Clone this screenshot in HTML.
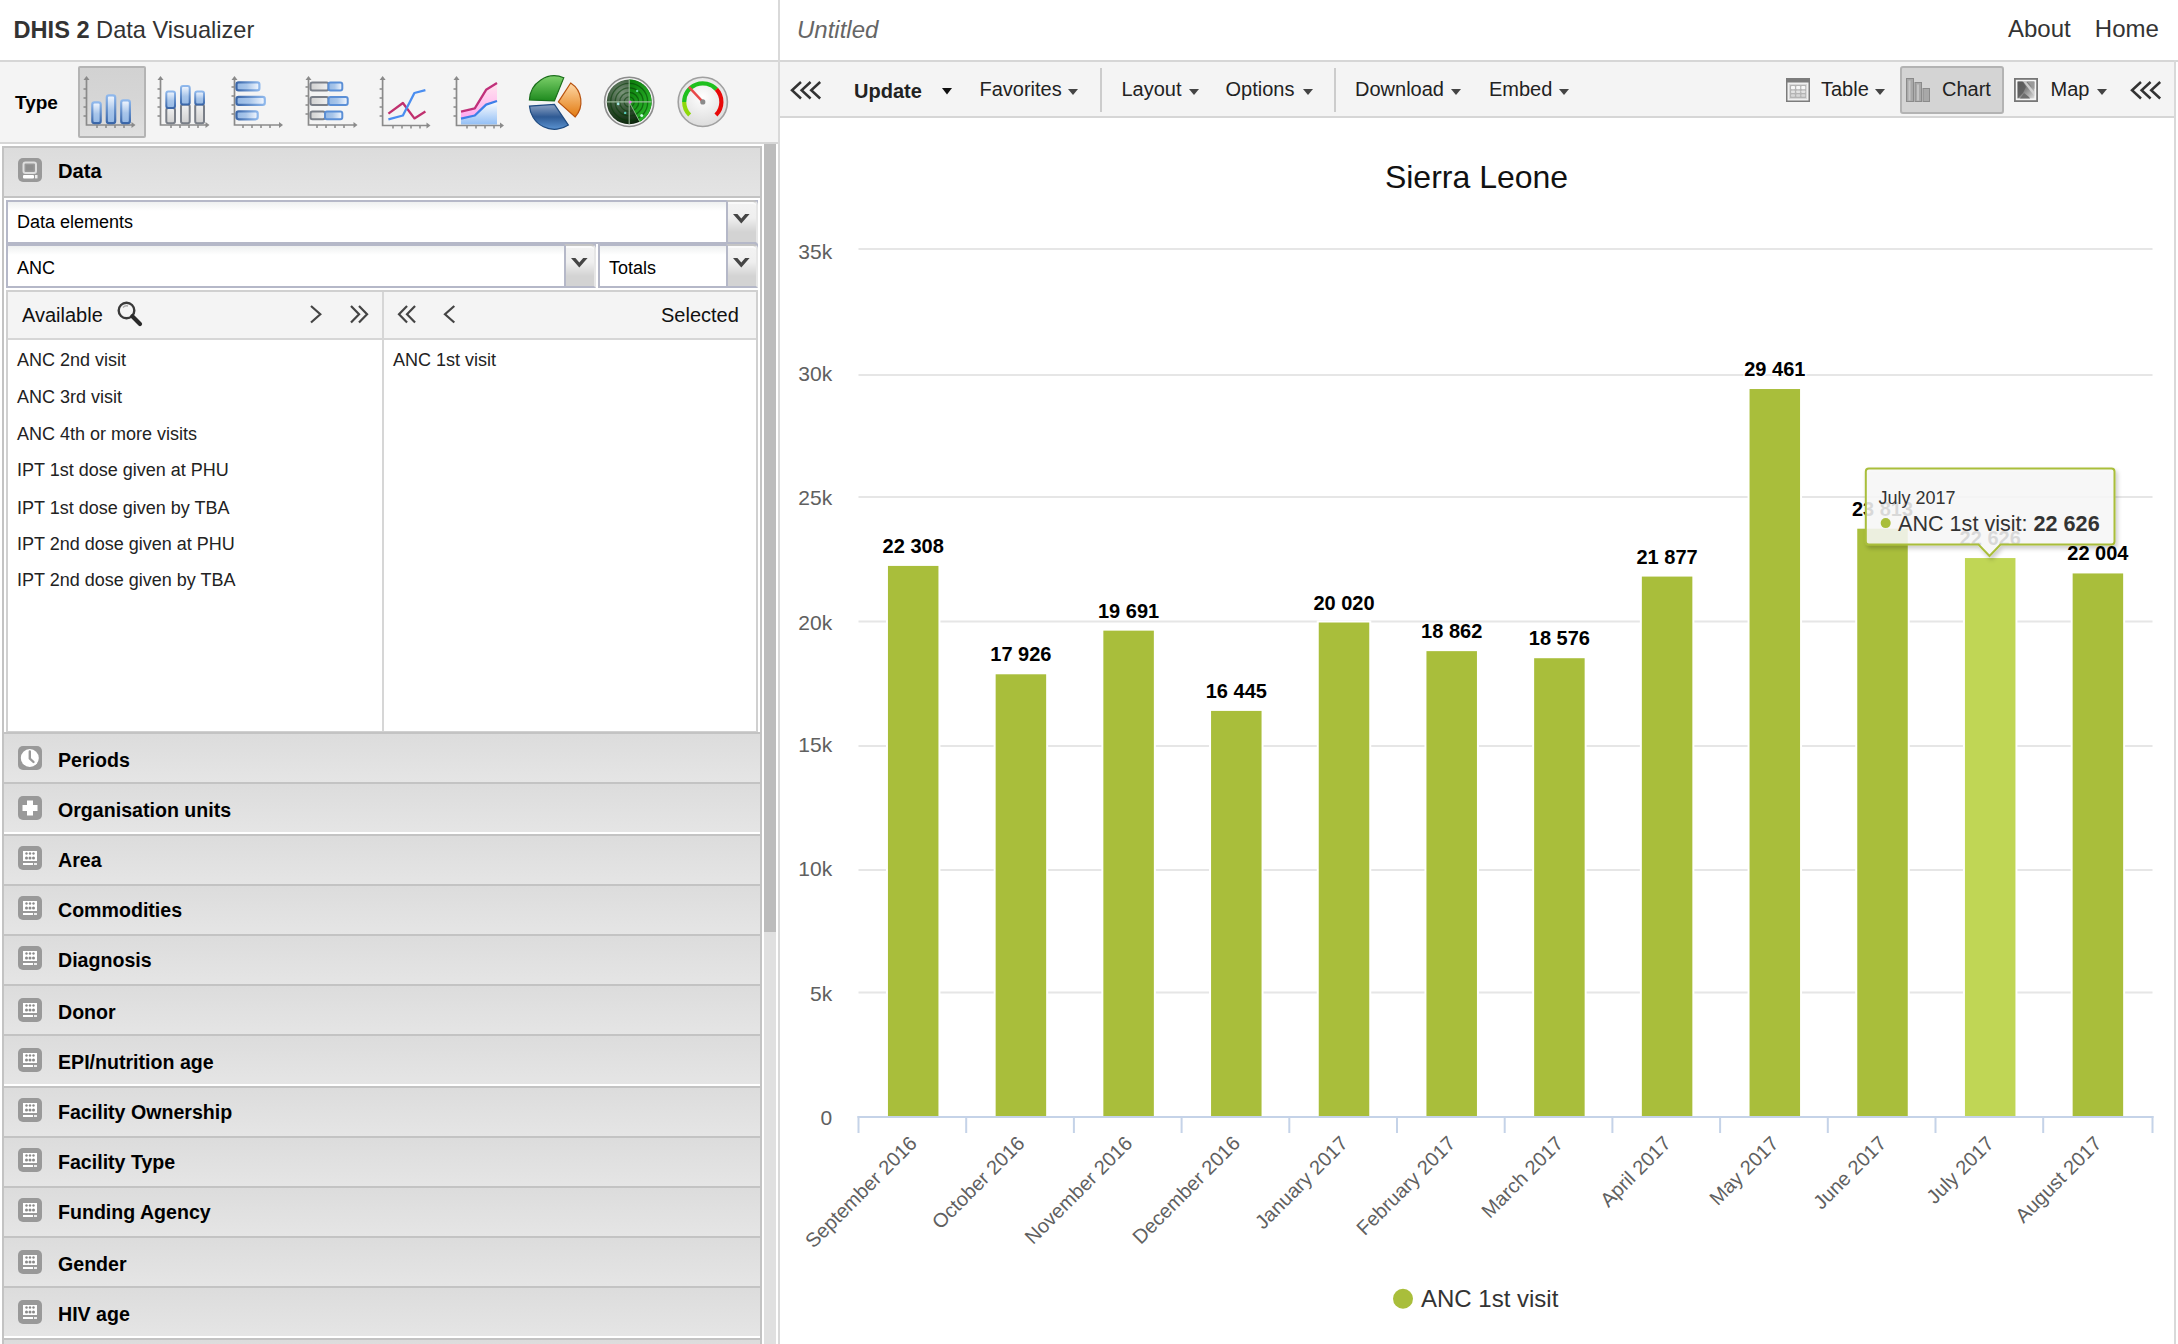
<!DOCTYPE html><html><head><meta charset="utf-8"><style>html,body{margin:0;padding:0;width:2178px;height:1344px;overflow:hidden;background:#fff;}body{position:relative;font-family:"Liberation Sans", sans-serif;}</style></head><body><div style="position:absolute;left:13.5px;top:19.02px;font-size:23.6px;line-height:23.6px;height:23.6px;color:#333;font-weight:normal;font-style:normal;white-space:pre;"><b>DHIS 2</b> Data Visualizer</div>
<div style="position:absolute;left:0px;top:60px;width:778px;height:2px;background:#d6d6d6;"></div>
<div style="position:absolute;left:0px;top:62px;width:778px;height:80px;background:#f4f4f4;"></div>
<div style="position:absolute;left:0px;top:142px;width:778px;height:2px;background:#d6d6d6;"></div>
<div style="position:absolute;left:15px;top:93.42px;font-size:19px;line-height:19px;height:19px;color:#000;font-weight:bold;font-style:normal;white-space:pre;">Type</div>
<div style="position:absolute;left:78px;top:66px;width:68px;height:72px;background:linear-gradient(#d2d2d2,#d6d6d6 50%,#e0e0e0);box-sizing:border-box;border:2px solid #b4b4b4;border-radius:2px;"></div>
<svg style="position:absolute;left:0;top:0" width="778" height="144"><defs>
<linearGradient id="gb" x1="0" y1="0" x2="0" y2="1"><stop offset="0" stop-color="#f4f8ff"/><stop offset="0.55" stop-color="#a9c6ea"/><stop offset="1" stop-color="#94b8e4"/></linearGradient>
<linearGradient id="gbh" x1="1" y1="0" x2="0" y2="0"><stop offset="0" stop-color="#f4f8ff"/><stop offset="0.55" stop-color="#a9c6ea"/><stop offset="1" stop-color="#94b8e4"/></linearGradient>
<linearGradient id="gg" x1="0" y1="0" x2="0" y2="1"><stop offset="0" stop-color="#f0f0f0"/><stop offset="1" stop-color="#d0d0d0"/></linearGradient>
<linearGradient id="ggh" x1="1" y1="0" x2="0" y2="0"><stop offset="0" stop-color="#f0f0f0"/><stop offset="1" stop-color="#d0d0d0"/></linearGradient>
<linearGradient id="garea" x1="0" y1="0" x2="0" y2="1"><stop offset="0" stop-color="#ffffff"/><stop offset="1" stop-color="#93bff5"/></linearGradient>
<linearGradient id="gpink" x1="0" y1="0" x2="0" y2="1"><stop offset="0" stop-color="#ffe6ee"/><stop offset="1" stop-color="#ffa8f0"/></linearGradient>
<radialGradient id="rad" cx="0.5" cy="0.5" r="0.5"><stop offset="0" stop-color="#1a3a1a"/><stop offset="1" stop-color="#0a1a0a"/></radialGradient>
<linearGradient id="pgreen" x1="0" y1="0" x2="0" y2="1"><stop offset="0" stop-color="#7cd06a"/><stop offset="1" stop-color="#1e8a1e"/></linearGradient>
<linearGradient id="porange" x1="0" y1="0" x2="0" y2="1"><stop offset="0" stop-color="#ffd9a8"/><stop offset="1" stop-color="#e27a10"/></linearGradient>
<linearGradient id="pblue" x1="0" y1="0" x2="0" y2="1"><stop offset="0" stop-color="#8fa4c4"/><stop offset="0.5" stop-color="#2f5a94"/><stop offset="1" stop-color="#5a92d0"/></linearGradient>
<radialGradient id="gface" cx="0.5" cy="0.4" r="0.6"><stop offset="0" stop-color="#ffffff"/><stop offset="1" stop-color="#dcdcdc"/></radialGradient>
<radialGradient id="radg" cx="0.35" cy="0.3" r="0.8"><stop offset="0" stop-color="#7a947a"/><stop offset="0.55" stop-color="#2c4a2c"/><stop offset="1" stop-color="#021a02"/></radialGradient><linearGradient id="radgreen" x1="0" y1="0" x2="1" y2="1"><stop offset="0" stop-color="#0a7a0a"/><stop offset="1" stop-color="#30c030"/></linearGradient><linearGradient id="gbs" x1="0" y1="0" x2="0" y2="1"><stop offset="0" stop-color="#8fb8ec"/><stop offset="1" stop-color="#3a66a8"/></linearGradient><linearGradient id="gbsh" x1="1" y1="0" x2="0" y2="0"><stop offset="0" stop-color="#8fb8ec"/><stop offset="1" stop-color="#3a66a8"/></linearGradient><linearGradient id="ggs" x1="0" y1="0" x2="0" y2="1"><stop offset="0" stop-color="#9aa0a8"/><stop offset="1" stop-color="#6a707a"/></linearGradient></defs><path d="M86.5 79 L86.5 125 L132.5 125" stroke="#8a8a8a" stroke-width="1.7" fill="none"/><path d="M83.5 80 L86.5 76 L89.5 80 Z" fill="#8a8a8a"/><path d="M131.5 122 L135.5 125 L131.5 128 Z" fill="#8a8a8a"/><path d="M83.5 89 L86.5 89" stroke="#8a8a8a" stroke-width="1.5"/><path d="M83.5 98 L86.5 98" stroke="#8a8a8a" stroke-width="1.5"/><path d="M83.5 107 L86.5 107" stroke="#8a8a8a" stroke-width="1.5"/><path d="M83.5 116 L86.5 116" stroke="#8a8a8a" stroke-width="1.5"/><path d="M97 125 L97 128" stroke="#8a8a8a" stroke-width="1.5"/><path d="M106 125 L106 128" stroke="#8a8a8a" stroke-width="1.5"/><path d="M115 125 L115 128" stroke="#8a8a8a" stroke-width="1.5"/><path d="M124 125 L124 128" stroke="#8a8a8a" stroke-width="1.5"/><rect x="92.3" y="102.4" width="8.4" height="20.799999999999997" rx="2.2" fill="url(#gb)" stroke="url(#gbs)" stroke-width="2.2"/><rect x="106.8" y="95.3" width="8.4" height="27.900000000000006" rx="2.2" fill="url(#gb)" stroke="url(#gbs)" stroke-width="2.2"/><rect x="121.2" y="100.4" width="8.699999999999983" height="22.799999999999997" rx="2.2" fill="url(#gb)" stroke="url(#gbs)" stroke-width="2.2"/><path d="M160.5 79 L160.5 125 L206.5 125" stroke="#8a8a8a" stroke-width="1.7" fill="none"/><path d="M157.5 80 L160.5 76 L163.5 80 Z" fill="#8a8a8a"/><path d="M205.5 122 L209.5 125 L205.5 128 Z" fill="#8a8a8a"/><path d="M157.5 89 L160.5 89" stroke="#8a8a8a" stroke-width="1.5"/><path d="M157.5 98 L160.5 98" stroke="#8a8a8a" stroke-width="1.5"/><path d="M157.5 107 L160.5 107" stroke="#8a8a8a" stroke-width="1.5"/><path d="M157.5 116 L160.5 116" stroke="#8a8a8a" stroke-width="1.5"/><path d="M171 125 L171 128" stroke="#8a8a8a" stroke-width="1.5"/><path d="M180 125 L180 128" stroke="#8a8a8a" stroke-width="1.5"/><path d="M189 125 L189 128" stroke="#8a8a8a" stroke-width="1.5"/><path d="M198 125 L198 128" stroke="#8a8a8a" stroke-width="1.5"/><rect x="166.3" y="108.1" width="8.699999999999989" height="15.100000000000009" rx="2" fill="url(#gg)" stroke="#7a7f88" stroke-width="2"/><rect x="166.3" y="91.4" width="8.699999999999989" height="16.69999999999999" rx="2" fill="url(#gb)" stroke="url(#gbs)" stroke-width="2"/><rect x="181" y="104.6" width="8.699999999999989" height="18.60000000000001" rx="2" fill="url(#gg)" stroke="#7a7f88" stroke-width="2"/><rect x="181" y="86" width="8.699999999999989" height="18.599999999999994" rx="2" fill="url(#gb)" stroke="url(#gbs)" stroke-width="2"/><rect x="195.2" y="104.6" width="8.800000000000011" height="18.60000000000001" rx="2" fill="url(#gg)" stroke="#7a7f88" stroke-width="2"/><rect x="195.2" y="91.4" width="8.800000000000011" height="13.199999999999989" rx="2" fill="url(#gb)" stroke="url(#gbs)" stroke-width="2"/><path d="M234.5 79 L234.5 125 L280 125" stroke="#8a8a8a" stroke-width="1.7" fill="none"/><path d="M231.5 80 L234.5 76 L237.5 80 Z" fill="#8a8a8a"/><path d="M279 122 L283 125 L279 128 Z" fill="#8a8a8a"/><path d="M231.5 87 L234.5 87" stroke="#8a8a8a" stroke-width="1.5"/><path d="M231.5 96 L234.5 96" stroke="#8a8a8a" stroke-width="1.5"/><path d="M231.5 105 L234.5 105" stroke="#8a8a8a" stroke-width="1.5"/><path d="M231.5 114 L234.5 114" stroke="#8a8a8a" stroke-width="1.5"/><path d="M243 125 L243 128" stroke="#8a8a8a" stroke-width="1.5"/><path d="M252 125 L252 128" stroke="#8a8a8a" stroke-width="1.5"/><path d="M261 125 L261 128" stroke="#8a8a8a" stroke-width="1.5"/><path d="M270 125 L270 128" stroke="#8a8a8a" stroke-width="1.5"/><rect x="236.5" y="82.4" width="22.899999999999977" height="8.0" rx="2.2" fill="url(#gbh)" stroke="url(#gbsh)" stroke-width="2.2"/><rect x="236.5" y="96.9" width="28.30000000000001" height="8.0" rx="2.2" fill="url(#gbh)" stroke="url(#gbsh)" stroke-width="2.2"/><rect x="236.5" y="111.4" width="21.19999999999999" height="7.8999999999999915" rx="2.2" fill="url(#gbh)" stroke="url(#gbsh)" stroke-width="2.2"/><path d="M308.5 79 L308.5 125 L354.5 125" stroke="#8a8a8a" stroke-width="1.7" fill="none"/><path d="M305.5 80 L308.5 76 L311.5 80 Z" fill="#8a8a8a"/><path d="M353.5 122 L357.5 125 L353.5 128 Z" fill="#8a8a8a"/><path d="M305.5 87 L308.5 87" stroke="#8a8a8a" stroke-width="1.5"/><path d="M305.5 96 L308.5 96" stroke="#8a8a8a" stroke-width="1.5"/><path d="M305.5 105 L308.5 105" stroke="#8a8a8a" stroke-width="1.5"/><path d="M305.5 114 L308.5 114" stroke="#8a8a8a" stroke-width="1.5"/><path d="M317 125 L317 128" stroke="#8a8a8a" stroke-width="1.5"/><path d="M326 125 L326 128" stroke="#8a8a8a" stroke-width="1.5"/><path d="M335 125 L335 128" stroke="#8a8a8a" stroke-width="1.5"/><path d="M344 125 L344 128" stroke="#8a8a8a" stroke-width="1.5"/><rect x="310.5" y="82.4" width="18.0" height="8.0" rx="2" fill="url(#ggh)" stroke="#7a7f88" stroke-width="2"/><rect x="328.5" y="82.4" width="13.800000000000011" height="8.0" rx="2" fill="url(#gbh)" stroke="#5b8fd6" stroke-width="2"/><rect x="310.5" y="96.9" width="18.0" height="8.0" rx="2" fill="url(#ggh)" stroke="#7a7f88" stroke-width="2"/><rect x="328.5" y="96.9" width="19.19999999999999" height="8.0" rx="2" fill="url(#gbh)" stroke="#5b8fd6" stroke-width="2"/><rect x="310.5" y="111.4" width="14.5" height="7.8999999999999915" rx="2" fill="url(#ggh)" stroke="#7a7f88" stroke-width="2"/><rect x="325" y="111.4" width="17.30000000000001" height="7.8999999999999915" rx="2" fill="url(#gbh)" stroke="#5b8fd6" stroke-width="2"/><path d="M382.6 79 L382.6 125.5 L427.5 125.5" stroke="#8a8a8a" stroke-width="1.7" fill="none"/><path d="M379.6 80 L382.6 76 L385.6 80 Z" fill="#8a8a8a"/><path d="M426.5 122.5 L430.5 125.5 L426.5 128.5 Z" fill="#8a8a8a"/><path d="M379.6 89 L382.6 89" stroke="#8a8a8a" stroke-width="1.5"/><path d="M379.6 98 L382.6 98" stroke="#8a8a8a" stroke-width="1.5"/><path d="M379.6 107 L382.6 107" stroke="#8a8a8a" stroke-width="1.5"/><path d="M379.6 116 L382.6 116" stroke="#8a8a8a" stroke-width="1.5"/><path d="M393 125.5 L393 128.5" stroke="#8a8a8a" stroke-width="1.5"/><path d="M402 125.5 L402 128.5" stroke="#8a8a8a" stroke-width="1.5"/><path d="M411 125.5 L411 128.5" stroke="#8a8a8a" stroke-width="1.5"/><path d="M420 125.5 L420 128.5" stroke="#8a8a8a" stroke-width="1.5"/><polyline points="388.4,113.6 402.9,103 414.4,118.4 425.4,111.6" fill="none" stroke="#c0306e" stroke-width="2.3" stroke-linejoin="round"/><polyline points="388.4,119.4 402.9,115.5 414.4,93 425.4,90.1" fill="none" stroke="#4a8ef0" stroke-width="2.3" stroke-linejoin="round"/><polygon points="461,111.6 474.8,108.4 486.1,89.8 497,83 497,101 486.1,104.6 474.8,115.5 461,118.7" fill="url(#gpink)"/><polygon points="461,118.7 474.8,115.5 486.1,104.6 497,101 497,124.5 461,124.5" fill="url(#garea)"/><path d="M456.5 79 L456.5 125.5 L501 125.5" stroke="#8a8a8a" stroke-width="1.7" fill="none"/><path d="M453.5 80 L456.5 76 L459.5 80 Z" fill="#8a8a8a"/><path d="M500 122.5 L504 125.5 L500 128.5 Z" fill="#8a8a8a"/><path d="M453.5 89 L456.5 89" stroke="#8a8a8a" stroke-width="1.5"/><path d="M453.5 98 L456.5 98" stroke="#8a8a8a" stroke-width="1.5"/><path d="M453.5 107 L456.5 107" stroke="#8a8a8a" stroke-width="1.5"/><path d="M453.5 116 L456.5 116" stroke="#8a8a8a" stroke-width="1.5"/><path d="M467 125.5 L467 128.5" stroke="#8a8a8a" stroke-width="1.5"/><path d="M476 125.5 L476 128.5" stroke="#8a8a8a" stroke-width="1.5"/><path d="M485 125.5 L485 128.5" stroke="#8a8a8a" stroke-width="1.5"/><path d="M494 125.5 L494 128.5" stroke="#8a8a8a" stroke-width="1.5"/><polyline points="461,111.6 474.8,108.4 486.1,89.8 497,83" fill="none" stroke="#c0307a" stroke-width="2.3" stroke-linejoin="round"/><polyline points="461,118.7 474.8,115.5 486.1,104.6 497,101" fill="none" stroke="#3d7fe8" stroke-width="2.3" stroke-linejoin="round"/><path d="M554.4 100.9 L529.4 100.0 A25 25 0 0 1 563.8 77.7 Z" fill="url(#pgreen)" stroke="#1a6e1a" stroke-width="1.2"/><path d="M558.4 101.9 L570.7 83.0 A22.5 22.5 0 0 1 575.1 117.0 Z" fill="url(#porange)" stroke="#b8520e" stroke-width="1.2"/><path d="M554.4 104.4 L568.4 125.1 A25 25 0 0 1 529.5 106.1 Z" fill="url(#pblue)" stroke="#1e4a80" stroke-width="1.2"/><circle cx="629.2" cy="101.9" r="24.6" fill="#f2f2f2" stroke="#8c8c8c" stroke-width="1.6"/><circle cx="629.2" cy="101.9" r="22.4" fill="url(#radg)"/><path d="M629.2 101.9 L629.20 79.50 A22.4 22.4 0 0 1 639.72 121.68 Z" fill="url(#radgreen)"/><circle cx="629.2" cy="101.9" r="5" fill="none" stroke="#063a06" stroke-width="1.3" opacity="0.55"/><circle cx="629.2" cy="101.9" r="9.5" fill="none" stroke="#063a06" stroke-width="1.3" opacity="0.55"/><circle cx="629.2" cy="101.9" r="14" fill="none" stroke="#063a06" stroke-width="1.3" opacity="0.55"/><circle cx="629.2" cy="101.9" r="18.5" fill="none" stroke="#063a06" stroke-width="1.3" opacity="0.55"/><path d="M606.8000000000001 101.9 L651.6 101.9 M629.2 79.5 L629.2 124.30000000000001" stroke="#a3bfa3" stroke-width="1.1" opacity="0.9"/><path d="M629.2 101.9 L639.72 121.68" stroke="#a3c8a3" stroke-width="1" opacity="0.8"/><circle cx="630.2" cy="101.9" r="1.5" fill="#e080e0"/><circle cx="641.7" cy="115.4" r="1.5" fill="#c8ffe0"/><circle cx="618.2" cy="103.9" r="1.3" fill="#9ee8e0"/><circle cx="637.2" cy="90.9" r="1.2" fill="#6ad8a0"/><circle cx="625.2" cy="112.9" r="1.2" fill="#5ad0c0"/><circle cx="702.8" cy="101.9" r="24.6" fill="url(#gface)" stroke="#a0a0a0" stroke-width="1.6"/><path d="M689.65 115.05 A18.6 18.6 0 0 1 684.20 101.90" fill="none" stroke="#8ed80a" stroke-width="4.2"/><path d="M684.20 101.90 A18.6 18.6 0 0 1 716.40 89.21" fill="none" stroke="#1ec01e" stroke-width="4.2"/><path d="M716.40 89.21 A18.6 18.6 0 0 1 715.95 115.05" fill="none" stroke="#e80808" stroke-width="4.2"/><path d="M702.8 101.9 L688.82 86.91" stroke="#e84848" stroke-width="2.4"/><circle cx="702.8" cy="101.9" r="2.6" fill="#8a8a8a"/></svg>
<div style="position:absolute;left:2px;top:146px;width:2px;height:1198px;background:#c3c3c3;"></div>
<div style="position:absolute;left:760px;top:146px;width:2px;height:1198px;background:#c3c3c3;"></div>
<div style="position:absolute;left:4px;top:146px;width:756px;height:2px;background:#c3c3c3;"></div>
<div style="position:absolute;left:4px;top:148px;width:756px;height:48px;background:linear-gradient(#dcdcdc,#e4e4e4);"></div>
<div style="position:absolute;left:4px;top:196px;width:756px;height:2px;background:#c3c3c3;"></div>
<div style="position:absolute;left:4px;top:198px;width:756px;height:535px;background:#ffffff;"></div>
<svg style="position:absolute;left:18px;top:158px" width="24" height="24"><rect x="0" y="0" width="24" height="24" rx="5" fill="#999"/><rect x="5.5" y="4.5" width="12.5" height="10.5" rx="2" fill="none" stroke="#dedede" stroke-width="2"/><rect x="8" y="7" width="7.5" height="5.5" fill="#8f8f8f"/><rect x="5" y="17" width="11" height="3.4" rx="1" fill="#fff"/><rect x="17" y="17" width="2.5" height="3.4" fill="#eee"/></svg>
<div style="position:absolute;left:58px;top:161.40px;font-size:20.2px;line-height:20.2px;height:20.2px;color:#000;font-weight:bold;font-style:normal;white-space:pre;">Data</div>
<div style="position:absolute;left:6px;top:200px;width:752px;height:44px;box-sizing:border-box;border:2px solid #b5b8c8;background:linear-gradient(#eef0f0,#ffffff 9px,#ffffff);"></div><div style="position:absolute;left:726px;top:200px;width:32px;height:44px;box-sizing:border-box;border-left:2px solid #b5b8c8;border-bottom:2px solid #b5b8c8;border-top:2px solid #c4c4c4;border-right:2px solid #e6e6e6;border-top-right-radius:5px;background:linear-gradient(#f3f3f3,#efefef 40%,#d3d3d3 75%,#d3d3d3);box-shadow:inset 0 2px 0 #fafafa;"></div><svg style="position:absolute;left:732.0px;top:211.0px" width="20" height="16"><path d="M1 3 L9.3 12.5 L17.6 3 L13.2 3 L9.3 7.6 L5.4 3 Z" fill="#454545"/></svg>
<div style="position:absolute;left:17px;top:213.36px;font-size:18px;line-height:18px;height:18px;color:#000;font-weight:normal;font-style:normal;white-space:pre;">Data elements</div>
<div style="position:absolute;left:6px;top:244px;width:590px;height:44px;box-sizing:border-box;border:2px solid #b5b8c8;background:linear-gradient(#eef0f0,#ffffff 9px,#ffffff);"></div><div style="position:absolute;left:564px;top:244px;width:32px;height:44px;box-sizing:border-box;border-left:2px solid #b5b8c8;border-bottom:2px solid #b5b8c8;border-top:2px solid #c4c4c4;border-right:2px solid #e6e6e6;border-top-right-radius:5px;background:linear-gradient(#f3f3f3,#efefef 40%,#d3d3d3 75%,#d3d3d3);box-shadow:inset 0 2px 0 #fafafa;"></div><svg style="position:absolute;left:570.0px;top:255.0px" width="20" height="16"><path d="M1 3 L9.3 12.5 L17.6 3 L13.2 3 L9.3 7.6 L5.4 3 Z" fill="#454545"/></svg>
<div style="position:absolute;left:17px;top:259.36px;font-size:18px;line-height:18px;height:18px;color:#000;font-weight:normal;font-style:normal;white-space:pre;">ANC</div>
<div style="position:absolute;left:598px;top:244px;width:160px;height:44px;box-sizing:border-box;border:2px solid #b5b8c8;background:linear-gradient(#eef0f0,#ffffff 9px,#ffffff);"></div><div style="position:absolute;left:726px;top:244px;width:32px;height:44px;box-sizing:border-box;border-left:2px solid #b5b8c8;border-bottom:2px solid #b5b8c8;border-top:2px solid #c4c4c4;border-right:2px solid #e6e6e6;border-top-right-radius:5px;background:linear-gradient(#f3f3f3,#efefef 40%,#d3d3d3 75%,#d3d3d3);box-shadow:inset 0 2px 0 #fafafa;"></div><svg style="position:absolute;left:732.0px;top:255.0px" width="20" height="16"><path d="M1 3 L9.3 12.5 L17.6 3 L13.2 3 L9.3 7.6 L5.4 3 Z" fill="#454545"/></svg>
<div style="position:absolute;left:609px;top:259.36px;font-size:18px;line-height:18px;height:18px;color:#000;font-weight:normal;font-style:normal;white-space:pre;">Totals</div>
<div style="position:absolute;left:6px;top:290px;width:752px;height:2px;background:#d0d0d0;"></div>
<div style="position:absolute;left:6px;top:292px;width:2px;height:440px;background:#d0d0d0;"></div>
<div style="position:absolute;left:756px;top:292px;width:2px;height:440px;background:#d0d0d0;"></div>
<div style="position:absolute;left:8px;top:292px;width:748px;height:46px;background:#f4f4f4;"></div>
<div style="position:absolute;left:8px;top:338px;width:748px;height:2px;background:#d6d6d6;"></div>
<div style="position:absolute;left:382px;top:292px;width:2px;height:439px;background:#d6d6d6;"></div>
<div style="position:absolute;left:22px;top:304.57px;font-size:20px;line-height:20px;height:20px;color:#111;font-weight:normal;font-style:normal;white-space:pre;">Available</div>
<div style="position:absolute;left:661px;top:304.57px;font-size:20px;line-height:20px;height:20px;color:#111;font-weight:normal;font-style:normal;white-space:pre;">Selected</div>
<svg style="position:absolute;left:114px;top:299px" width="32" height="30"><circle cx="12.5" cy="11.5" r="7.8" fill="none" stroke="#3a3a3a" stroke-width="2.4"/><path d="M9 8.5 A5 5 0 0 1 14 7" stroke="#aaa" stroke-width="1.4" fill="none"/><path d="M18.3 17.3 L26 25" stroke="#2a2a2a" stroke-width="4.2" stroke-linecap="round"/></svg>
<svg style="position:absolute;left:309px;top:304px" width="19" height="20.5"><path d="M2 2 L11.3 10.25 L2 18.5" fill="none" stroke="#444" stroke-width="2.2"/></svg>
<svg style="position:absolute;left:348.5px;top:304px" width="25" height="20.5"><path d="M2 2 L10.06 10.25 L2 18.5" fill="none" stroke="#444" stroke-width="2.2"/><path d="M10 2 L18.060000000000002 10.25 L10 18.5" fill="none" stroke="#444" stroke-width="2.2"/></svg>
<svg style="position:absolute;left:396.5px;top:304px" width="25" height="20.5"><path d="M10.06 2 L2 10.25 L10.06 18.5" fill="none" stroke="#444" stroke-width="2.2"/><path d="M18.060000000000002 2 L10 10.25 L18.060000000000002 18.5" fill="none" stroke="#444" stroke-width="2.2"/></svg>
<svg style="position:absolute;left:442.5px;top:304px" width="19" height="20.5"><path d="M11.3 2 L2 10.25 L11.3 18.5" fill="none" stroke="#444" stroke-width="2.2"/></svg>
<div style="position:absolute;left:17px;top:350.76px;font-size:18px;line-height:18px;height:18px;color:#222;font-weight:normal;font-style:normal;white-space:pre;">ANC 2nd visit</div>
<div style="position:absolute;left:17px;top:388.36px;font-size:18px;line-height:18px;height:18px;color:#222;font-weight:normal;font-style:normal;white-space:pre;">ANC 3rd visit</div>
<div style="position:absolute;left:17px;top:424.86px;font-size:18px;line-height:18px;height:18px;color:#222;font-weight:normal;font-style:normal;white-space:pre;">ANC 4th or more visits</div>
<div style="position:absolute;left:17px;top:461.06px;font-size:18px;line-height:18px;height:18px;color:#222;font-weight:normal;font-style:normal;white-space:pre;">IPT 1st dose given at PHU</div>
<div style="position:absolute;left:17px;top:499.36px;font-size:18px;line-height:18px;height:18px;color:#222;font-weight:normal;font-style:normal;white-space:pre;">IPT 1st dose given by TBA</div>
<div style="position:absolute;left:17px;top:535.16px;font-size:18px;line-height:18px;height:18px;color:#222;font-weight:normal;font-style:normal;white-space:pre;">IPT 2nd dose given at PHU</div>
<div style="position:absolute;left:17px;top:570.96px;font-size:18px;line-height:18px;height:18px;color:#222;font-weight:normal;font-style:normal;white-space:pre;">IPT 2nd dose given by TBA</div>
<div style="position:absolute;left:393px;top:350.76px;font-size:18px;line-height:18px;height:18px;color:#222;font-weight:normal;font-style:normal;white-space:pre;">ANC 1st visit</div>
<div style="position:absolute;left:6px;top:731px;width:752px;height:2px;background:#d0d0d0;"></div>
<div style="position:absolute;left:4px;top:732px;width:756px;height:2px;background:#c3c3c3;"></div>
<div style="position:absolute;left:4px;top:734px;width:756px;height:48px;background:linear-gradient(#dcdcdc,#e5e5e5);"></div>
<svg style="position:absolute;left:18px;top:746px" width="24" height="24"><rect x="0" y="0" width="24" height="24" rx="5" fill="#999"/><circle cx="11.8" cy="12" r="9" fill="#fff"/><path d="M11.8 5.5 L11.8 12.5 L15.5 16" fill="none" stroke="#999" stroke-width="2.4" stroke-linecap="round"/></svg>
<div style="position:absolute;left:58px;top:750.71px;font-size:19.6px;line-height:19.6px;height:19.6px;color:#000;font-weight:bold;font-style:normal;white-space:pre;">Periods</div>
<div style="position:absolute;left:4px;top:782px;width:756px;height:2px;background:#c3c3c3;"></div>
<div style="position:absolute;left:4px;top:784px;width:756px;height:48px;background:linear-gradient(#dcdcdc,#e5e5e5);"></div>
<svg style="position:absolute;left:18px;top:796px" width="24" height="24"><rect x="0" y="0" width="24" height="24" rx="5" fill="#999"/><path d="M9 4.5 H15 V9 H19.5 V15 H15 V19.5 H9 V15 H4.5 V9 H9 Z" fill="#fff"/></svg>
<div style="position:absolute;left:58px;top:800.71px;font-size:19.6px;line-height:19.6px;height:19.6px;color:#000;font-weight:bold;font-style:normal;white-space:pre;">Organisation units</div>
<div style="position:absolute;left:4px;top:832px;width:756px;height:2px;background:#ffffff;"></div>
<div style="position:absolute;left:4px;top:834px;width:756px;height:2px;background:#c3c3c3;"></div>
<div style="position:absolute;left:4px;top:836px;width:756px;height:48px;background:linear-gradient(#dcdcdc,#e5e5e5);"></div>
<svg style="position:absolute;left:18px;top:846px" width="24" height="24"><rect x="0" y="0" width="24" height="24" rx="5" fill="#999"/><rect x="5" y="5" width="14" height="10" fill="#fff"/><g fill="#8a8a8a"><circle cx="8.5" cy="7.5" r="1.2"/><circle cx="12" cy="7.5" r="1.2"/><circle cx="15.5" cy="7.5" r="1.2"/><circle cx="8.5" cy="12" r="1.5"/><circle cx="12" cy="12" r="1.5"/><circle cx="15.5" cy="12" r="1.5"/></g><rect x="5" y="17" width="10" height="2" fill="#fff"/><rect x="16" y="17" width="3" height="2" fill="#eee"/></svg>
<div style="position:absolute;left:58px;top:850.71px;font-size:19.6px;line-height:19.6px;height:19.6px;color:#000;font-weight:bold;font-style:normal;white-space:pre;">Area</div>
<div style="position:absolute;left:4px;top:884px;width:756px;height:2px;background:#c3c3c3;"></div>
<div style="position:absolute;left:4px;top:886px;width:756px;height:48px;background:linear-gradient(#dcdcdc,#e5e5e5);"></div>
<svg style="position:absolute;left:18px;top:896px" width="24" height="24"><rect x="0" y="0" width="24" height="24" rx="5" fill="#999"/><rect x="5" y="5" width="14" height="10" fill="#fff"/><g fill="#8a8a8a"><circle cx="8.5" cy="7.5" r="1.2"/><circle cx="12" cy="7.5" r="1.2"/><circle cx="15.5" cy="7.5" r="1.2"/><circle cx="8.5" cy="12" r="1.5"/><circle cx="12" cy="12" r="1.5"/><circle cx="15.5" cy="12" r="1.5"/></g><rect x="5" y="17" width="10" height="2" fill="#fff"/><rect x="16" y="17" width="3" height="2" fill="#eee"/></svg>
<div style="position:absolute;left:58px;top:900.71px;font-size:19.6px;line-height:19.6px;height:19.6px;color:#000;font-weight:bold;font-style:normal;white-space:pre;">Commodities</div>
<div style="position:absolute;left:4px;top:934px;width:756px;height:2px;background:#c3c3c3;"></div>
<div style="position:absolute;left:4px;top:936px;width:756px;height:48px;background:linear-gradient(#dcdcdc,#e5e5e5);"></div>
<svg style="position:absolute;left:18px;top:946px" width="24" height="24"><rect x="0" y="0" width="24" height="24" rx="5" fill="#999"/><rect x="5" y="5" width="14" height="10" fill="#fff"/><g fill="#8a8a8a"><circle cx="8.5" cy="7.5" r="1.2"/><circle cx="12" cy="7.5" r="1.2"/><circle cx="15.5" cy="7.5" r="1.2"/><circle cx="8.5" cy="12" r="1.5"/><circle cx="12" cy="12" r="1.5"/><circle cx="15.5" cy="12" r="1.5"/></g><rect x="5" y="17" width="10" height="2" fill="#fff"/><rect x="16" y="17" width="3" height="2" fill="#eee"/></svg>
<div style="position:absolute;left:58px;top:950.71px;font-size:19.6px;line-height:19.6px;height:19.6px;color:#000;font-weight:bold;font-style:normal;white-space:pre;">Diagnosis</div>
<div style="position:absolute;left:4px;top:984px;width:756px;height:2px;background:#c3c3c3;"></div>
<div style="position:absolute;left:4px;top:986px;width:756px;height:48px;background:linear-gradient(#dcdcdc,#e5e5e5);"></div>
<svg style="position:absolute;left:18px;top:998px" width="24" height="24"><rect x="0" y="0" width="24" height="24" rx="5" fill="#999"/><rect x="5" y="5" width="14" height="10" fill="#fff"/><g fill="#8a8a8a"><circle cx="8.5" cy="7.5" r="1.2"/><circle cx="12" cy="7.5" r="1.2"/><circle cx="15.5" cy="7.5" r="1.2"/><circle cx="8.5" cy="12" r="1.5"/><circle cx="12" cy="12" r="1.5"/><circle cx="15.5" cy="12" r="1.5"/></g><rect x="5" y="17" width="10" height="2" fill="#fff"/><rect x="16" y="17" width="3" height="2" fill="#eee"/></svg>
<div style="position:absolute;left:58px;top:1002.71px;font-size:19.6px;line-height:19.6px;height:19.6px;color:#000;font-weight:bold;font-style:normal;white-space:pre;">Donor</div>
<div style="position:absolute;left:4px;top:1034px;width:756px;height:2px;background:#c3c3c3;"></div>
<div style="position:absolute;left:4px;top:1036px;width:756px;height:48px;background:linear-gradient(#dcdcdc,#e5e5e5);"></div>
<svg style="position:absolute;left:18px;top:1048px" width="24" height="24"><rect x="0" y="0" width="24" height="24" rx="5" fill="#999"/><rect x="5" y="5" width="14" height="10" fill="#fff"/><g fill="#8a8a8a"><circle cx="8.5" cy="7.5" r="1.2"/><circle cx="12" cy="7.5" r="1.2"/><circle cx="15.5" cy="7.5" r="1.2"/><circle cx="8.5" cy="12" r="1.5"/><circle cx="12" cy="12" r="1.5"/><circle cx="15.5" cy="12" r="1.5"/></g><rect x="5" y="17" width="10" height="2" fill="#fff"/><rect x="16" y="17" width="3" height="2" fill="#eee"/></svg>
<div style="position:absolute;left:58px;top:1052.71px;font-size:19.6px;line-height:19.6px;height:19.6px;color:#000;font-weight:bold;font-style:normal;white-space:pre;">EPI/nutrition age</div>
<div style="position:absolute;left:4px;top:1084px;width:756px;height:2px;background:#ffffff;"></div>
<div style="position:absolute;left:4px;top:1086px;width:756px;height:2px;background:#c3c3c3;"></div>
<div style="position:absolute;left:4px;top:1088px;width:756px;height:48px;background:linear-gradient(#dcdcdc,#e5e5e5);"></div>
<svg style="position:absolute;left:18px;top:1098px" width="24" height="24"><rect x="0" y="0" width="24" height="24" rx="5" fill="#999"/><rect x="5" y="5" width="14" height="10" fill="#fff"/><g fill="#8a8a8a"><circle cx="8.5" cy="7.5" r="1.2"/><circle cx="12" cy="7.5" r="1.2"/><circle cx="15.5" cy="7.5" r="1.2"/><circle cx="8.5" cy="12" r="1.5"/><circle cx="12" cy="12" r="1.5"/><circle cx="15.5" cy="12" r="1.5"/></g><rect x="5" y="17" width="10" height="2" fill="#fff"/><rect x="16" y="17" width="3" height="2" fill="#eee"/></svg>
<div style="position:absolute;left:58px;top:1102.71px;font-size:19.6px;line-height:19.6px;height:19.6px;color:#000;font-weight:bold;font-style:normal;white-space:pre;">Facility Ownership</div>
<div style="position:absolute;left:4px;top:1136px;width:756px;height:2px;background:#c3c3c3;"></div>
<div style="position:absolute;left:4px;top:1138px;width:756px;height:48px;background:linear-gradient(#dcdcdc,#e5e5e5);"></div>
<svg style="position:absolute;left:18px;top:1148px" width="24" height="24"><rect x="0" y="0" width="24" height="24" rx="5" fill="#999"/><rect x="5" y="5" width="14" height="10" fill="#fff"/><g fill="#8a8a8a"><circle cx="8.5" cy="7.5" r="1.2"/><circle cx="12" cy="7.5" r="1.2"/><circle cx="15.5" cy="7.5" r="1.2"/><circle cx="8.5" cy="12" r="1.5"/><circle cx="12" cy="12" r="1.5"/><circle cx="15.5" cy="12" r="1.5"/></g><rect x="5" y="17" width="10" height="2" fill="#fff"/><rect x="16" y="17" width="3" height="2" fill="#eee"/></svg>
<div style="position:absolute;left:58px;top:1152.71px;font-size:19.6px;line-height:19.6px;height:19.6px;color:#000;font-weight:bold;font-style:normal;white-space:pre;">Facility Type</div>
<div style="position:absolute;left:4px;top:1186px;width:756px;height:2px;background:#c3c3c3;"></div>
<div style="position:absolute;left:4px;top:1188px;width:756px;height:48px;background:linear-gradient(#dcdcdc,#e5e5e5);"></div>
<svg style="position:absolute;left:18px;top:1198px" width="24" height="24"><rect x="0" y="0" width="24" height="24" rx="5" fill="#999"/><rect x="5" y="5" width="14" height="10" fill="#fff"/><g fill="#8a8a8a"><circle cx="8.5" cy="7.5" r="1.2"/><circle cx="12" cy="7.5" r="1.2"/><circle cx="15.5" cy="7.5" r="1.2"/><circle cx="8.5" cy="12" r="1.5"/><circle cx="12" cy="12" r="1.5"/><circle cx="15.5" cy="12" r="1.5"/></g><rect x="5" y="17" width="10" height="2" fill="#fff"/><rect x="16" y="17" width="3" height="2" fill="#eee"/></svg>
<div style="position:absolute;left:58px;top:1202.71px;font-size:19.6px;line-height:19.6px;height:19.6px;color:#000;font-weight:bold;font-style:normal;white-space:pre;">Funding Agency</div>
<div style="position:absolute;left:4px;top:1236px;width:756px;height:2px;background:#c3c3c3;"></div>
<div style="position:absolute;left:4px;top:1238px;width:756px;height:48px;background:linear-gradient(#dcdcdc,#e5e5e5);"></div>
<svg style="position:absolute;left:18px;top:1250px" width="24" height="24"><rect x="0" y="0" width="24" height="24" rx="5" fill="#999"/><rect x="5" y="5" width="14" height="10" fill="#fff"/><g fill="#8a8a8a"><circle cx="8.5" cy="7.5" r="1.2"/><circle cx="12" cy="7.5" r="1.2"/><circle cx="15.5" cy="7.5" r="1.2"/><circle cx="8.5" cy="12" r="1.5"/><circle cx="12" cy="12" r="1.5"/><circle cx="15.5" cy="12" r="1.5"/></g><rect x="5" y="17" width="10" height="2" fill="#fff"/><rect x="16" y="17" width="3" height="2" fill="#eee"/></svg>
<div style="position:absolute;left:58px;top:1254.71px;font-size:19.6px;line-height:19.6px;height:19.6px;color:#000;font-weight:bold;font-style:normal;white-space:pre;">Gender</div>
<div style="position:absolute;left:4px;top:1286px;width:756px;height:2px;background:#c3c3c3;"></div>
<div style="position:absolute;left:4px;top:1288px;width:756px;height:48px;background:linear-gradient(#dcdcdc,#e5e5e5);"></div>
<svg style="position:absolute;left:18px;top:1300px" width="24" height="24"><rect x="0" y="0" width="24" height="24" rx="5" fill="#999"/><rect x="5" y="5" width="14" height="10" fill="#fff"/><g fill="#8a8a8a"><circle cx="8.5" cy="7.5" r="1.2"/><circle cx="12" cy="7.5" r="1.2"/><circle cx="15.5" cy="7.5" r="1.2"/><circle cx="8.5" cy="12" r="1.5"/><circle cx="12" cy="12" r="1.5"/><circle cx="15.5" cy="12" r="1.5"/></g><rect x="5" y="17" width="10" height="2" fill="#fff"/><rect x="16" y="17" width="3" height="2" fill="#eee"/></svg>
<div style="position:absolute;left:58px;top:1304.71px;font-size:19.6px;line-height:19.6px;height:19.6px;color:#000;font-weight:bold;font-style:normal;white-space:pre;">HIV age</div>
<div style="position:absolute;left:4px;top:1336px;width:756px;height:2px;background:#ffffff;"></div>
<div style="position:absolute;left:4px;top:1338px;width:756px;height:2px;background:#c3c3c3;"></div>
<div style="position:absolute;left:4px;top:1340px;width:756px;height:48px;background:linear-gradient(#dcdcdc,#e5e5e5);"></div>
<div style="position:absolute;left:764px;top:144px;width:12px;height:1200px;background:#e0e0e0;"></div>
<div style="position:absolute;left:764px;top:144px;width:12px;height:787.5px;background:#bcbcbc;"></div>
<div style="position:absolute;left:778px;top:0px;width:2px;height:1344px;background:#d9d9d9;"></div>
<div style="position:absolute;left:797px;top:18.18px;font-size:24px;line-height:24px;height:24px;color:#666;font-weight:normal;font-style:italic;white-space:pre;">Untitled</div>
<div style="position:absolute;left:2008px;top:17.38px;font-size:24px;line-height:24px;height:24px;color:#333;font-weight:normal;font-style:normal;white-space:pre;">About</div>
<div style="position:absolute;left:2094.8px;top:17.38px;font-size:24px;line-height:24px;height:24px;color:#333;font-weight:normal;font-style:normal;white-space:pre;">Home</div>
<div style="position:absolute;left:780px;top:60px;width:1398px;height:2px;background:#d6d6d6;"></div>
<div style="position:absolute;left:780px;top:62px;width:1394px;height:54px;background:#f4f4f4;"></div>
<div style="position:absolute;left:780px;top:116px;width:1394px;height:2px;background:#d6d6d6;"></div>
<div style="position:absolute;left:2174px;top:60px;width:2px;height:1284px;background:#d9d9d9;"></div>
<svg style="position:absolute;left:790.3px;top:79.6px" width="37.7" height="20.5"><path d="M10.99 2 L2.0 10.25 L10.99 18.5" fill="none" stroke="#333" stroke-width="2.5"/><path d="M20.59 2 L11.6 10.25 L20.59 18.5" fill="none" stroke="#333" stroke-width="2.5"/><path d="M30.189999999999998 2 L21.2 10.25 L30.189999999999998 18.5" fill="none" stroke="#333" stroke-width="2.5"/></svg>
<div style="position:absolute;left:854px;top:81.07px;font-size:20px;line-height:20px;height:20px;color:#222;font-weight:bold;font-style:normal;white-space:pre;">Update</div>
<svg style="position:absolute;left:941.5px;top:88px" width="10" height="6.5"><path d="M0 0 L10 0 L5.0 6.5 Z" fill="#111"/></svg>
<div style="position:absolute;left:979.5px;top:78.87px;font-size:20px;line-height:20px;height:20px;color:#222;font-weight:normal;font-style:normal;white-space:pre;">Favorites</div>
<svg style="position:absolute;left:1067.5px;top:89px" width="10" height="6"><path d="M0 0 L10 0 L5.0 6 Z" fill="#444"/></svg>
<div style="position:absolute;left:1100px;top:68px;width:2px;height:44px;background:#cccccc;"></div>
<div style="position:absolute;left:1121.5px;top:78.87px;font-size:20px;line-height:20px;height:20px;color:#222;font-weight:normal;font-style:normal;white-space:pre;">Layout</div>
<svg style="position:absolute;left:1189px;top:89px" width="10" height="6"><path d="M0 0 L10 0 L5.0 6 Z" fill="#444"/></svg>
<div style="position:absolute;left:1225.5px;top:78.87px;font-size:20px;line-height:20px;height:20px;color:#222;font-weight:normal;font-style:normal;white-space:pre;">Options</div>
<svg style="position:absolute;left:1303px;top:89px" width="10" height="6"><path d="M0 0 L10 0 L5.0 6 Z" fill="#444"/></svg>
<div style="position:absolute;left:1334px;top:68px;width:2px;height:44px;background:#cccccc;"></div>
<div style="position:absolute;left:1355px;top:78.87px;font-size:20px;line-height:20px;height:20px;color:#222;font-weight:normal;font-style:normal;white-space:pre;">Download</div>
<svg style="position:absolute;left:1451px;top:89px" width="10" height="6"><path d="M0 0 L10 0 L5.0 6 Z" fill="#444"/></svg>
<div style="position:absolute;left:1489px;top:78.87px;font-size:20px;line-height:20px;height:20px;color:#222;font-weight:normal;font-style:normal;white-space:pre;">Embed</div>
<svg style="position:absolute;left:1559px;top:89px" width="10" height="6"><path d="M0 0 L10 0 L5.0 6 Z" fill="#444"/></svg>
<svg style="position:absolute;left:1786px;top:78px" width="24" height="24"><rect x="0" y="0" width="24" height="24" fill="#7c7c7c"/><rect x="1.5" y="4.5" width="21" height="18" fill="#f0f0f0"/><rect x="3.5" y="6.5" width="17" height="14" fill="#b4b4b4" stroke="#d8d8d8" stroke-width="1"/><g fill="#f7f7f7"><rect x="5" y="8" width="4" height="3.2" rx="0.8"/><rect x="10.2" y="8" width="4" height="3.2" rx="0.8"/><rect x="15.3" y="8" width="4" height="3.2" rx="0.8"/><rect x="5" y="12.4" width="4" height="2.6" rx="0.8" fill="#e2e2e2"/><rect x="10.2" y="12.4" width="4" height="2.6" rx="0.8" fill="#e2e2e2"/><rect x="15.3" y="12.4" width="4" height="2.6" rx="0.8" fill="#e2e2e2"/><rect x="5" y="16.2" width="4" height="2.6" rx="0.8" fill="#d6d6d6"/><rect x="10.2" y="16.2" width="4" height="2.6" rx="0.8" fill="#d6d6d6"/><rect x="15.3" y="16.2" width="4" height="2.6" rx="0.8" fill="#d6d6d6"/></g></svg>
<div style="position:absolute;left:1821px;top:78.87px;font-size:20px;line-height:20px;height:20px;color:#222;font-weight:normal;font-style:normal;white-space:pre;">Table</div>
<svg style="position:absolute;left:1875px;top:89px" width="10" height="6"><path d="M0 0 L10 0 L5.0 6 Z" fill="#444"/></svg>
<div style="position:absolute;left:1900px;top:66px;width:104px;height:48px;background:#d4d4d4;box-sizing:border-box;border:2px solid #b3b3b3;border-radius:3px;"></div>
<svg style="position:absolute;left:1906px;top:78px" width="24" height="24"><rect x="0.5" y="0.5" width="7" height="23" fill="#a8a8a8" stroke="#8a8a8a"/><rect x="9" y="4.5" width="6.5" height="19" fill="#a8a8a8" stroke="#8a8a8a"/><rect x="17" y="10.5" width="6.5" height="13" fill="#a8a8a8" stroke="#8a8a8a"/><rect x="2.5" y="2.5" width="2" height="20" fill="#c4c4c4"/><rect x="11" y="6.5" width="2" height="16" fill="#c4c4c4"/></svg>
<div style="position:absolute;left:1942px;top:78.87px;font-size:20px;line-height:20px;height:20px;color:#222;font-weight:normal;font-style:normal;white-space:pre;">Chart</div>
<svg style="position:absolute;left:2014px;top:78px" width="24" height="24"><defs><linearGradient id="mapg" x1="0" y1="0" x2="1" y2="1"><stop offset="0" stop-color="#555"/><stop offset="0.5" stop-color="#888"/><stop offset="1" stop-color="#ddd"/></linearGradient></defs><rect x="0.9" y="0.9" width="22.2" height="22.2" fill="#f6f6f6" stroke="#777" stroke-width="1.8"/><rect x="3.6" y="3.6" width="16.8" height="16.8" fill="url(#mapg)"/><path d="M9 3.6 L12 3.6 L20.4 14 L20.4 18 Z" fill="#d4d4d4" opacity="0.9"/><path d="M13 3.6 L20.4 3.6 L20.4 11 Z" fill="#9a9a9a"/><path d="M3.6 3.6 L8.5 3.6 L12 9 L9 15 L3.6 20.4 Z" fill="#5a5a5a" opacity="0.8"/><path d="M6 20.4 L10 15 L15 19 L16 20.4 Z" fill="#6e6e6e"/></svg>
<div style="position:absolute;left:2050.5px;top:78.87px;font-size:20px;line-height:20px;height:20px;color:#222;font-weight:normal;font-style:normal;white-space:pre;">Map</div>
<svg style="position:absolute;left:2097px;top:89px" width="10" height="6"><path d="M0 0 L10 0 L5.0 6 Z" fill="#444"/></svg>
<svg style="position:absolute;left:2130.3px;top:79.6px" width="37.7" height="20.5"><path d="M10.99 2 L2.0 10.25 L10.99 18.5" fill="none" stroke="#333" stroke-width="2.5"/><path d="M20.59 2 L11.6 10.25 L20.59 18.5" fill="none" stroke="#333" stroke-width="2.5"/><path d="M30.189999999999998 2 L21.2 10.25 L30.189999999999998 18.5" fill="none" stroke="#333" stroke-width="2.5"/></svg>
<svg style="position:absolute;left:0;top:0" width="2178" height="1344" font-family='"Liberation Sans", sans-serif'><defs><filter id="tsh" x="-10%" y="-10%" width="130%" height="140%"><feDropShadow dx="2" dy="3" stdDeviation="2" flood-color="#000" flood-opacity="0.22"/></filter></defs><text x="1476.5" y="188.2" text-anchor="middle" font-size="32" fill="#111">Sierra Leone</text><rect x="858.5" y="248" width="1294.0" height="2" fill="#e6e6e6"/><rect x="858.5" y="374" width="1294.0" height="2" fill="#e6e6e6"/><rect x="858.5" y="496" width="1294.0" height="2" fill="#e6e6e6"/><rect x="858.5" y="620.5" width="1294.0" height="2" fill="#e6e6e6"/><rect x="858.5" y="745" width="1294.0" height="2" fill="#e6e6e6"/><rect x="858.5" y="869" width="1294.0" height="2" fill="#e6e6e6"/><rect x="858.5" y="991.5" width="1294.0" height="2" fill="#e6e6e6"/><text x="832.2" y="258.9" text-anchor="end" font-size="21" fill="#606060">35k</text><text x="832.2" y="380.9" text-anchor="end" font-size="21" fill="#606060">30k</text><text x="832.2" y="504.8" text-anchor="end" font-size="21" fill="#606060">25k</text><text x="832.2" y="629.8" text-anchor="end" font-size="21" fill="#606060">20k</text><text x="832.2" y="751.9" text-anchor="end" font-size="21" fill="#606060">15k</text><text x="832.2" y="875.9" text-anchor="end" font-size="21" fill="#606060">10k</text><text x="832.2" y="1000.8" text-anchor="end" font-size="21" fill="#606060">5k</text><text x="832.2" y="1125" text-anchor="end" font-size="21" fill="#606060">0</text><rect x="885.95" y="563.92" width="54.5" height="553.68" fill="#ffffff"/><rect x="887.95" y="565.92" width="50.5" height="551.68" fill="#a9be3b"/><rect x="993.65" y="672.29" width="54.5" height="445.31" fill="#ffffff"/><rect x="995.65" y="674.29" width="50.5" height="443.31" fill="#a9be3b"/><rect x="1101.35" y="628.64" width="54.5" height="488.96" fill="#ffffff"/><rect x="1103.35" y="630.64" width="50.5" height="486.96" fill="#a9be3b"/><rect x="1209.05" y="708.92" width="54.5" height="408.68" fill="#ffffff"/><rect x="1211.05" y="710.92" width="50.5" height="406.68" fill="#a9be3b"/><rect x="1316.75" y="620.51" width="54.5" height="497.09" fill="#ffffff"/><rect x="1318.75" y="622.51" width="50.5" height="495.09" fill="#a9be3b"/><rect x="1424.45" y="649.14" width="54.5" height="468.46" fill="#ffffff"/><rect x="1426.45" y="651.14" width="50.5" height="466.46" fill="#a9be3b"/><rect x="1532.15" y="656.22" width="54.5" height="461.38" fill="#ffffff"/><rect x="1534.15" y="658.22" width="50.5" height="459.38" fill="#a9be3b"/><rect x="1639.85" y="574.58" width="54.5" height="543.02" fill="#ffffff"/><rect x="1641.85" y="576.58" width="50.5" height="541.02" fill="#a9be3b"/><rect x="1747.55" y="387.03" width="54.5" height="730.57" fill="#ffffff"/><rect x="1749.55" y="389.03" width="50.5" height="728.57" fill="#a9be3b"/><rect x="1855.25" y="526.70" width="54.5" height="590.90" fill="#ffffff"/><rect x="1857.25" y="528.70" width="50.5" height="588.90" fill="#a9be3b"/><rect x="1962.95" y="556.06" width="54.5" height="561.54" fill="#ffffff"/><rect x="1964.95" y="558.06" width="50.5" height="559.54" fill="#c0d655"/><rect x="2070.65" y="571.44" width="54.5" height="546.16" fill="#ffffff"/><rect x="2072.65" y="573.44" width="50.5" height="544.16" fill="#a9be3b"/><rect x="857.5" y="1116" width="1296.0" height="2" fill="#c5d3e8"/><rect x="857.50" y="1116" width="2" height="17" fill="#c5d3e8"/><rect x="965.20" y="1116" width="2" height="17" fill="#c5d3e8"/><rect x="1072.90" y="1116" width="2" height="17" fill="#c5d3e8"/><rect x="1180.60" y="1116" width="2" height="17" fill="#c5d3e8"/><rect x="1288.30" y="1116" width="2" height="17" fill="#c5d3e8"/><rect x="1396.00" y="1116" width="2" height="17" fill="#c5d3e8"/><rect x="1503.70" y="1116" width="2" height="17" fill="#c5d3e8"/><rect x="1611.40" y="1116" width="2" height="17" fill="#c5d3e8"/><rect x="1719.10" y="1116" width="2" height="17" fill="#c5d3e8"/><rect x="1826.80" y="1116" width="2" height="17" fill="#c5d3e8"/><rect x="1934.50" y="1116" width="2" height="17" fill="#c5d3e8"/><rect x="2042.20" y="1116" width="2" height="17" fill="#c5d3e8"/><rect x="2151.50" y="1116" width="2" height="17" fill="#c5d3e8"/><text x="913.20" y="552.92" text-anchor="middle" font-size="20" font-weight="bold" fill="#000" stroke="#fff" stroke-width="3" paint-order="stroke" stroke-linejoin="round">22 308</text><text x="1020.90" y="661.29" text-anchor="middle" font-size="20" font-weight="bold" fill="#000" stroke="#fff" stroke-width="3" paint-order="stroke" stroke-linejoin="round">17 926</text><text x="1128.60" y="617.64" text-anchor="middle" font-size="20" font-weight="bold" fill="#000" stroke="#fff" stroke-width="3" paint-order="stroke" stroke-linejoin="round">19 691</text><text x="1236.30" y="697.92" text-anchor="middle" font-size="20" font-weight="bold" fill="#000" stroke="#fff" stroke-width="3" paint-order="stroke" stroke-linejoin="round">16 445</text><text x="1344.00" y="609.51" text-anchor="middle" font-size="20" font-weight="bold" fill="#000" stroke="#fff" stroke-width="3" paint-order="stroke" stroke-linejoin="round">20 020</text><text x="1451.70" y="638.14" text-anchor="middle" font-size="20" font-weight="bold" fill="#000" stroke="#fff" stroke-width="3" paint-order="stroke" stroke-linejoin="round">18 862</text><text x="1559.40" y="645.22" text-anchor="middle" font-size="20" font-weight="bold" fill="#000" stroke="#fff" stroke-width="3" paint-order="stroke" stroke-linejoin="round">18 576</text><text x="1667.10" y="563.58" text-anchor="middle" font-size="20" font-weight="bold" fill="#000" stroke="#fff" stroke-width="3" paint-order="stroke" stroke-linejoin="round">21 877</text><text x="1774.80" y="376.03" text-anchor="middle" font-size="20" font-weight="bold" fill="#000" stroke="#fff" stroke-width="3" paint-order="stroke" stroke-linejoin="round">29 461</text><text x="1882.50" y="515.70" text-anchor="middle" font-size="20" font-weight="bold" fill="#000" stroke="#fff" stroke-width="3" paint-order="stroke" stroke-linejoin="round">23 813</text><text x="1990.20" y="545.06" text-anchor="middle" font-size="20" font-weight="bold" fill="#000" stroke="#fff" stroke-width="3" paint-order="stroke" stroke-linejoin="round">22 626</text><text x="2097.90" y="560.44" text-anchor="middle" font-size="20" font-weight="bold" fill="#000" stroke="#fff" stroke-width="3" paint-order="stroke" stroke-linejoin="round">22 004</text><text x="918.20" y="1144.5" text-anchor="end" font-size="20" fill="#606060" transform="rotate(-45 918.20 1144.5)">September 2016</text><text x="1025.90" y="1144.5" text-anchor="end" font-size="20" fill="#606060" transform="rotate(-45 1025.90 1144.5)">October 2016</text><text x="1133.60" y="1144.5" text-anchor="end" font-size="20" fill="#606060" transform="rotate(-45 1133.60 1144.5)">November 2016</text><text x="1241.30" y="1144.5" text-anchor="end" font-size="20" fill="#606060" transform="rotate(-45 1241.30 1144.5)">December 2016</text><text x="1349.00" y="1144.5" text-anchor="end" font-size="20" fill="#606060" transform="rotate(-45 1349.00 1144.5)">January 2017</text><text x="1456.70" y="1144.5" text-anchor="end" font-size="20" fill="#606060" transform="rotate(-45 1456.70 1144.5)">February 2017</text><text x="1564.40" y="1144.5" text-anchor="end" font-size="20" fill="#606060" transform="rotate(-45 1564.40 1144.5)">March 2017</text><text x="1672.10" y="1144.5" text-anchor="end" font-size="20" fill="#606060" transform="rotate(-45 1672.10 1144.5)">April 2017</text><text x="1779.80" y="1144.5" text-anchor="end" font-size="20" fill="#606060" transform="rotate(-45 1779.80 1144.5)">May 2017</text><text x="1887.50" y="1144.5" text-anchor="end" font-size="20" fill="#606060" transform="rotate(-45 1887.50 1144.5)">June 2017</text><text x="1995.20" y="1144.5" text-anchor="end" font-size="20" fill="#606060" transform="rotate(-45 1995.20 1144.5)">July 2017</text><text x="2102.90" y="1144.5" text-anchor="end" font-size="20" fill="#606060" transform="rotate(-45 2102.90 1144.5)">August 2017</text><circle cx="1403" cy="1298.7" r="10" fill="#a9be3b"/><text x="1421" y="1306.8" font-size="24" fill="#333">ANC 1st visit</text><path d="M1868.8 468.6 L2111.5 468.6 Q2114.5 468.6 2114.5 471.6 L2114.5 541.6 Q2114.5 544.6 2111.5 544.6 L2000.5 544.6 L1989.5 556 L1978.5 544.6 L1868.8 544.6 Q1865.8 544.6 1865.8 541.6 L1865.8 471.6 Q1865.8 468.6 1868.8 468.6 Z" fill="rgba(249,249,249,0.85)" stroke="#a9be3b" stroke-width="2" filter="url(#tsh)"/><text x="1878.5" y="504.1" font-size="18" fill="#333">July 2017</text><circle cx="1885.7" cy="523.1" r="5" fill="#a9be3b"/><text x="1898" y="530.9" font-size="21.6" fill="#333">ANC 1st visit: <tspan font-weight="bold">22 626</tspan></text></svg></body></html>
